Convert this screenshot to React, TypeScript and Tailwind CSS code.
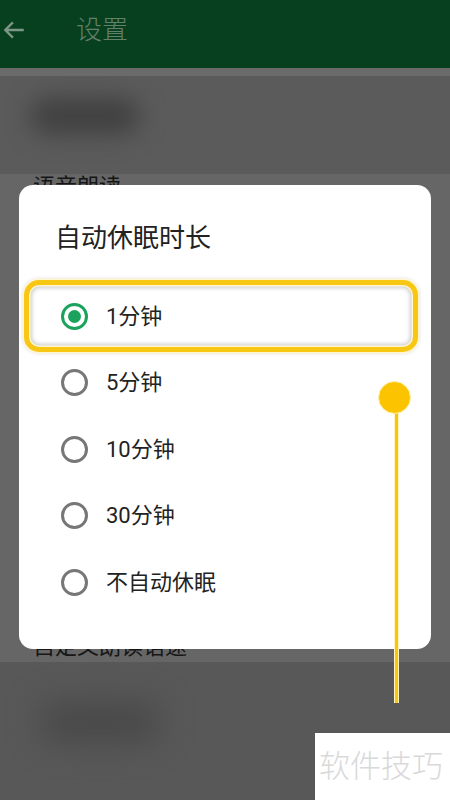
import React from 'react';

const options = ['1分钟', '5分钟', '10分钟', '30分钟', '不自动休眠'];

const Radio: React.FC<{ checked?: boolean }> = ({ checked }) => (
  <div
    className={`w-[27px] h-[27px] rounded-full border-[3px] flex items-center justify-center ${
      checked ? 'border-[#1ba35d]' : 'border-[#777777]'
    }`}
  >
    {checked && <div className="w-[13px] h-[13px] rounded-full bg-[#1ba35d]" />}
  </div>
);

const App: React.FC = () => {
  return (
    <div
      className="relative w-[450px] h-[800px] overflow-hidden bg-[#595959]"
      style={{ fontFamily: 'Roboto, "Noto Sans CJK SC", sans-serif' }}
    >
      {/* dimmed page behind the dialog */}
      <header className="h-[68px] bg-[#06401f] flex items-center pb-[8px]">
        <svg width="26" height="26" viewBox="0 0 24 24" className="ml-[1px]" fill="none" stroke="#7d9686" strokeWidth="2.2">
          <path d="M21 12H4M11 5l-7 7 7 7" />
        </svg>
        <span className="ml-[49px] text-[26px] font-light text-[#62806c]">设置</span>
      </header>
      <div className="h-[8px] bg-[#6b6b6b]" />
      <div className="h-[98px] bg-[#5b5b5b] overflow-hidden pt-[22px] pl-[30px]">
        <div className="w-[110px] h-[36px] rounded-full bg-[#404040] blur-[12px]" />
      </div>
      <div className="h-[488px] bg-[#666666] px-[33px]">
        <p className="text-[22px] leading-[26px] text-[#161616]">语音朗读</p>
        <p className="mt-[434px] text-[22px] leading-[26px] text-[#161616]">自定义朗读语速</p>
      </div>
      <div className="h-[138px] bg-[#585858] overflow-hidden pt-[40px] pl-[40px]">
        <div className="w-[120px] h-[40px] rounded-full bg-[#484848] blur-[16px]" />
      </div>

      {/* dialog */}
      <div className="absolute left-[19px] top-[185px] w-[412px] h-[464px] bg-white rounded-[14px]">
        <h2 className="pt-[36px] pl-[36px] text-[26px] leading-[34px] text-[#222222]">自动休眠时长</h2>
        <ul className="mt-[28px]">
          {options.map((o, i) => (
            <li key={o} className="h-[66.5px] flex items-center pl-[42px]">
              <Radio checked={i === 0} />
              <span className="ml-[18px] text-[22px] text-[#222222]">{o}</span>
            </li>
          ))}
        </ul>
      </div>

      {/* annotation */}
      <div className="absolute left-[24px] top-[280px] w-[394px] h-[72px] rounded-[15px] border-[5px] border-[#f7c713] shadow-[0_0_0_1.5px_#fff6d0,0_0_4px_1px_rgba(0,0,0,0.15),inset_0_0_0_1.5px_#fff6d0,inset_0_0_4px_3px_rgba(0,0,0,0.2)]" />
      <div className="absolute left-[394px] top-[405px] w-[5px] h-[298px] bg-[#f5c518] border-x border-[#fff3c0]" />
      <div className="absolute left-[378px] top-[381px] w-[33px] h-[33px] rounded-full bg-[#fcc400] border border-[#fff2b8]" />

      {/* watermark */}
      <div className="absolute left-[315px] top-[733px] w-[135px] h-[67px] bg-white pl-[4px] pt-[14px]">
        <span className="text-[31px] leading-[40px] font-light text-[#d9d9d9]">软件技巧</span>
      </div>
    </div>
  );
};

export default App;
